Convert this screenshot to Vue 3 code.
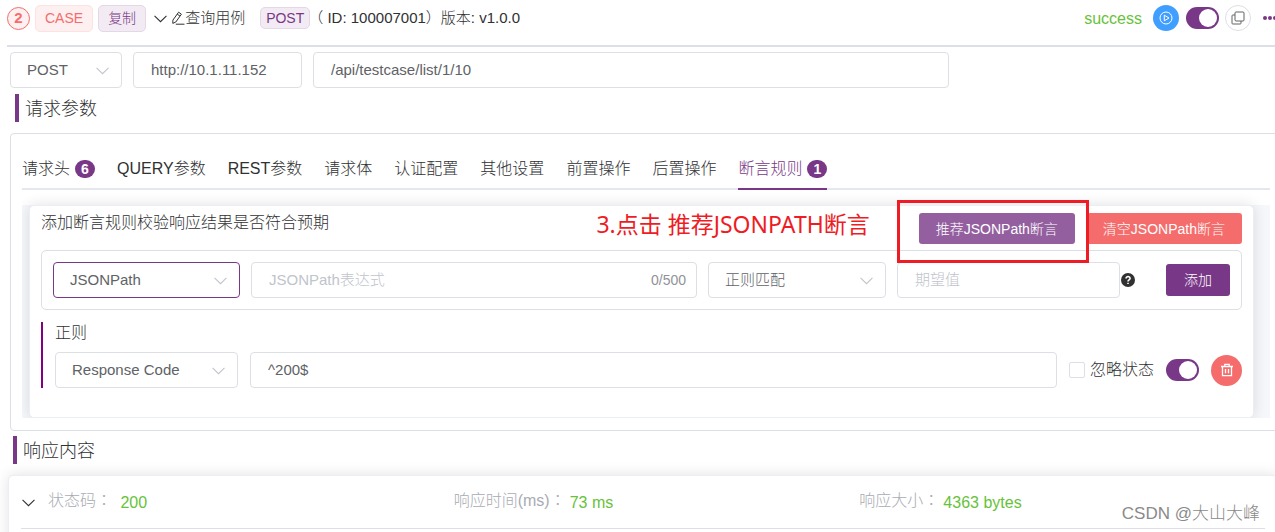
<script setup>
import { ref } from 'vue'

const method = ref('POST')
const host = ref('http://10.1.11.152')
const path = ref('/api/testcase/list/1/10')
const enabled = ref(true)
const ruleEnabled = ref(true)
const ignored = ref(false)
const kind = ref('JSONPath')
const expression = ref('')
const matcher = ref('正则匹配')
const expected = ref('')
const source = ref('Response Code')
const pattern = ref('^200$')
const active = ref('断言规则')

const tabs = [
  { name: '请求头', count: 6 },
  { name: 'QUERY参数' },
  { name: 'REST参数' },
  { name: '请求体' },
  { name: '认证配置' },
  { name: '其他设置' },
  { name: '前置操作' },
  { name: '后置操作' },
  { name: '断言规则', count: 1 }
]

const metrics = [
  { label: '状态码：\u00a0', value: '200' },
  { label: '响应时间(ms)：', value: '73 ms' },
  { label: '响应大小：', value: '4363 bytes' }
]
</script>

<template>
  <main class="page">
    <header class="case-bar">
      <span class="step">2</span>
      <span class="tag danger">CASE</span>
      <button type="button" class="tag purple">复制</button>
      <button type="button" class="case-name">
        <svg class="chev" viewBox="0 0 12 12"><path d="M0.5 3.500 6 9l5.500-5.500" /></svg>
        <svg class="pen" viewBox="0 0 14 14"><path d="M7.600 1.200 10.400 3.200 4.800 11 1.800 12.400 1.900 9.100zM6.200 3.100 9 5.100M4.800 13.200h8.700" /></svg>
        <span>查询用例</span>
      </button>
      <span class="tag purple small">POST</span>
      <span class="case-id">（ ID: 100007001）版本: v1.0.0</span>
      <span class="result">success</span>
      <button type="button" class="round blue" aria-label="运行">
        <svg viewBox="0 0 14 14"><circle cx="7" cy="7" r="6" /><path d="M5.300 4.200v5.600L10 7z" /></svg>
      </button>
      <input v-model="enabled" class="switch" type="checkbox" role="switch" aria-label="启用用例" />
      <button type="button" class="round plain" aria-label="复制用例">
        <svg viewBox="0 0 14 14"><rect x="4" y="1" width="9" height="9" rx="1" /><path d="M4 4H1.800a.8.8 0 0 0-.8.8v7.400a.8.8 0 0 0 .8.8h7.400a.8.8 0 0 0 .8-.8V10" /></svg>
      </button>
      <button type="button" class="more" aria-label="更多">
        <svg viewBox="0 0 14 14"><circle cx="2" cy="7" r="2" /><circle cx="7" cy="7" r="2" /><circle cx="12" cy="7" r="2" /></svg>
      </button>
    </header>

    <div class="url-row">
      <div class="select">
        <select v-model="method" aria-label="请求方法"><option>POST</option></select>
        <svg class="chev" viewBox="0 0 12 12"><path d="M0.5 3.500 6 9l5.500-5.500" /></svg>
      </div>
      <input v-model="host" class="field" type="text" aria-label="主机" />
      <input v-model="path" class="field" type="text" aria-label="路径" />
    </div>

    <h2 class="section">请求参数</h2>

    <section class="panel">
      <nav class="tabs" role="tablist">
        <button
          v-for="tab in tabs"
          :key="tab.name"
          type="button"
          role="tab"
          class="tab"
          :class="{ active: tab.name === active }"
          :aria-selected="tab.name === active"
          @click="active = tab.name"
        >
          {{ tab.name }}<span v-if="tab.count" class="badge">{{ tab.count }}</span>
        </button>
      </nav>

      <div class="tab-body">
        <div class="backdrop">
          <div class="card">
            <div class="card-head">
              <span>添加断言规则校验响应结果是否符合预期</span>
              <strong class="note">3.点击 推荐JSONPATH断言</strong>
              <div class="framed">
                <button type="button" class="btn soft">推荐JSONPath断言</button>
              </div>
              <button type="button" class="btn red">清空JSONPath断言</button>
            </div>

            <div class="rule-form">
              <div class="select focus">
                <select v-model="kind" aria-label="断言类型"><option>JSONPath</option></select>
                <svg class="chev" viewBox="0 0 12 12"><path d="M0.5 3.500 6 9l5.500-5.500" /></svg>
              </div>
              <div class="field counted">
                <input v-model="expression" type="text" maxlength="500" placeholder="JSONPath表达式" aria-label="JSONPath表达式" />
                <span>{{ expression.length }}/500</span>
              </div>
              <div class="select">
                <select v-model="matcher" aria-label="匹配方式"><option>正则匹配</option></select>
                <svg class="chev" viewBox="0 0 12 12"><path d="M0.5 3.500 6 9l5.500-5.500" /></svg>
              </div>
              <div class="expected">
                <input v-model="expected" class="field" type="text" placeholder="期望值" aria-label="期望值" />
                <svg class="help" viewBox="0 0 14 14"><circle cx="7" cy="7" r="7" /><path d="M5 5.600C5 2.800 9.200 3 9.100 5.500 9 6.900 7 6.900 7 8.500M7 9.700v1.300" /></svg>
              </div>
              <button type="button" class="btn solid">添加</button>
            </div>

            <div class="rule-group">
              <div class="rule-label">正则</div>
              <div class="rule-row">
                <div class="select">
                  <select v-model="source" aria-label="匹配来源"><option>Response Code</option></select>
                  <svg class="chev" viewBox="0 0 12 12"><path d="M0.5 3.500 6 9l5.500-5.500" /></svg>
                </div>
                <input v-model="pattern" class="field" type="text" aria-label="正则表达式" />
                <label class="check"><input v-model="ignored" type="checkbox" />忽略状态</label>
                <input v-model="ruleEnabled" class="switch" type="checkbox" role="switch" aria-label="启用规则" />
                <button type="button" class="round delete" aria-label="删除">
                  <svg viewBox="0 0 14 14"><path d="M1 3.500h12M4.800 3.300V1.300h4.400v2M2.500 3.700v9h9v-9M5.500 6v4.300M8.500 6v4.300" /></svg>
                </button>
              </div>
            </div>
          </div>
        </div>
      </div>
    </section>

    <h2 class="section response">响应内容</h2>

    <section class="response-card">
      <div class="metrics">
        <svg class="chev" viewBox="0 0 12 12"><path d="M0.5 3.500 6 9l5.500-5.500" /></svg>
        <div v-for="m in metrics" :key="m.label" class="metric">
          <span>{{ m.label }}</span><span class="value">{{ m.value }}</span>
        </div>
      </div>
    </section>
    <div class="watermark">CSDN @大山大峰</div>
  </main>
</template>

<style>
html,
body {
  height: 100%;
  overflow: hidden;
  background: #fff;
}
</style>

<style scoped>
* {
  box-sizing: border-box;
}
.page {
  --purple: #783887;
  --line: #dcdfe6;
  position: relative;
  height: 100vh;
  overflow: hidden;
  color: #303133;
  font: 300 16px/20px "Liberation Sans", "Noto Sans CJK SC", sans-serif;
}
button,
input,
select {
  margin: 0;
  font: inherit;
  color: inherit;
}
button {
  padding: 0;
  border: 0;
  background: none;
  cursor: pointer;
}
svg {
  display: block;
  flex: none;
  fill: none;
  stroke: currentColor;
}
.chev {
  width: 13px;
  height: 13px;
}

.case-bar {
  display: flex;
  align-items: center;
  height: 47px;
  margin: 0 -2px 0 7px;
  padding-bottom: 9px;
  border-bottom: 2px solid var(--line);
}
.step {
  width: 23px;
  height: 23px;
  margin-right: 5px;
  border: 1px solid #f56c6c;
  border-radius: 50%;
  background: #fef0f0;
  color: #f56c6c;
  font-size: 15px;
  font-weight: 700;
  line-height: 20px;
  text-align: center;
}
.tag {
  height: 27px;
  margin-right: 5px;
  padding: 0 9px;
  border: 1px solid;
  border-radius: 5px;
  font-size: 14px;
  line-height: 24px;
}
.danger {
  border-color: #fde2e2;
  background: #fef0f0;
  color: #f56c6c;
}
.purple {
  border-color: #e4d7e7;
  background: #f2ebf3;
  color: var(--purple);
}
.small {
  height: 22px;
  margin: 0;
  padding: 0 5px;
  line-height: 20px;
}
.case-name {
  display: flex;
  align-items: center;
  margin: 0 15px 0 3px;
  font-size: 15px;
}
.pen {
  width: 14px;
  height: 14px;
  margin-left: 4px;
}
.case-id {
  margin: 0 auto 0 -2px;
  font-size: 15px;
}
.result {
  margin-right: 11px;
  padding-top: 2px;
  color: #67c23a;
}
.round {
  display: flex;
  align-items: center;
  justify-content: center;
  flex: none;
  width: 26px;
  height: 26px;
  border-radius: 50%;
}
.round svg {
  width: 14px;
  height: 14px;
}
.blue {
  margin-right: 7px;
  background: #409eff;
  color: #fff;
}
.plain {
  margin: 0 12px 0 6px;
  border: 1px solid var(--line);
  color: #606266;
}
.more {
  color: var(--purple);
}
.more svg {
  width: 14px;
  height: 14px;
  fill: currentColor;
  stroke: none;
}
.switch {
  appearance: none;
  display: flex;
  align-items: center;
  flex: none;
  width: 33px;
  height: 22px;
  padding: 2px;
  border-radius: 11px;
  background: var(--line);
}
.switch::before {
  content: "";
  width: 18px;
  height: 18px;
  border-radius: 50%;
  background: #fff;
}
.switch:checked {
  justify-content: flex-end;
  background: var(--purple);
}

.select,
.field {
  min-width: 0;
  height: 36px;
  border: 1px solid var(--line);
  border-radius: 4px;
  background: #fff;
  color: #606266;
  font-size: 15px;
  outline: 0;
}
.field {
  padding: 0 17px;
}
input.field {
  padding-bottom: 1px;
}
.select {
  display: grid;
  align-items: center;
}
.select select {
  grid-area: 1 / 1;
  width: 100%;
  height: 34px;
  padding: 0 32px 0 16px;
  appearance: none;
  border: 0;
  border-radius: 4px;
  background: none;
  outline: 0;
}
.select .chev {
  grid-area: 1 / 1;
  justify-self: end;
  margin-right: 12px;
  color: #c0c4cc;
  pointer-events: none;
}
.focus {
  border-color: var(--purple);
}
input::placeholder {
  color: #c0c4cc;
  opacity: 1;
}

.url-row {
  display: grid;
  grid-template-columns: 112fr 169fr 636fr 315fr;
  gap: 11px;
  padding: 5px 0 0 10px;
}
.section {
  height: 28px;
  margin: 6px 0 0 15px;
  padding-left: 6px;
  border-left: 4px solid var(--purple);
  font-size: 18px;
  font-weight: 300;
  line-height: 30px;
}
.response {
  margin: 5px 0 0 13px;
}

.panel {
  margin: 11px -7px 0 10px;
  padding: 12px 11px;
  border: 1px solid var(--line);
  border-radius: 4px;
}
.tabs {
  display: flex;
  gap: 22px;
  border-bottom: 2px solid #e4e7ed;
}
.tab {
  display: flex;
  align-items: center;
  height: 44px;
  margin-bottom: -2px;
  padding-top: 3px;
  border-bottom: 2px solid transparent;
  white-space: nowrap;
}
.tab.active {
  border-color: var(--purple);
  color: var(--purple);
}
.badge {
  width: 20px;
  height: 18px;
  margin-left: 5px;
  border-radius: 9px;
  background: var(--purple);
  color: #fff;
  font-size: 14px;
  font-weight: 700;
  line-height: 18px;
}
.tab-body {
  padding-top: 15px;
  overflow: hidden;
}
.backdrop {
  padding: 0 16px 0 7px;
  background: #f5f7fa;
}
.card {
  min-height: 213px;
  padding: 7px 11px;
  border: 1px solid #ebeef5;
  border-radius: 5px;
  background: #fff;
  box-shadow: 0 0 14px rgba(0, 0, 0, 0.12);
}
.card-head {
  display: flex;
  align-items: flex-start;
}
.note {
  margin: 0 49px 0 auto;
  color: #ee1c25;
  font: 400 23px/22px "Noto Sans", "Noto Sans CJK SC", sans-serif;
}
.btn {
  height: 31px;
  padding: 0 17px;
  border-radius: 3px;
  color: #fff;
  font-size: 14px;
  white-space: nowrap;
}
.soft {
  background: #935f9f;
}
.red {
  margin-left: 11px;
  background: #f56c6c;
}
.solid {
  height: 32px;
  background: var(--purple);
}
.framed {
  position: relative;
}
.framed::after {
  content: "";
  position: absolute;
  z-index: 2;
  inset: -13px -14px -19px -22px;
  border: 3px solid #ee1c25;
  pointer-events: none;
}
.rule-form {
  display: grid;
  grid-template-columns: 187fr 446fr 178fr 258fr 64px;
  align-items: center;
  gap: 11px;
  margin-top: 6px;
  padding: 11px;
  border: 1px solid var(--line);
  border-radius: 5px;
}
.counted {
  display: flex;
  align-items: center;
  padding-right: 10px;
}
.counted input {
  flex: 1;
  min-width: 0;
  padding: 0;
  border: 0;
  background: none;
  outline: 0;
}
.counted span {
  color: #909399;
  font-size: 14px;
}
.expected {
  display: flex;
  align-items: center;
  gap: 1px;
  min-width: 0;
  padding-right: 20px;
}
.expected .field {
  flex: 1;
}
.help {
  width: 14px;
  height: 14px;
}
.help circle {
  fill: #303133;
  stroke: none;
}
.help path {
  stroke: #fff;
  stroke-width: 1.6;
}
.rule-group {
  margin-top: 12px;
  padding-left: 12px;
  border-left: 2px solid #800080;
}
.rule-label {
  padding: 1px 0 9px;
}
.rule-row {
  display: flex;
  align-items: center;
  gap: 12px;
}
.rule-row .select {
  width: 183px;
}
.rule-row .field {
  flex: 1;
}
.check {
  display: flex;
  align-items: center;
  gap: 5px;
}
.check input {
  appearance: none;
  width: 16px;
  height: 16px;
  border: 1px solid var(--line);
  border-radius: 2px;
  background: #fff;
}
.delete {
  width: 31px;
  height: 31px;
  background: #f56c6c;
  color: #fff;
}
.delete svg {
  stroke-width: 1.3;
}

.response-card {
  margin: 11px -3px 0 8px;
  padding: 0 12px 20px;
  border: 1px solid #ebeef5;
  border-radius: 5px;
  background: #fff;
  box-shadow: 0 0 14px rgba(0, 0, 0, 0.12);
}
.metrics {
  display: flex;
  align-items: center;
  height: 53px;
  padding-left: 1px;
  border-bottom: 1px solid var(--line);
}
.metrics .chev {
  margin-right: 13px;
}
.metric {
  display: flex;
  flex: 1;
  gap: 4px;
  color: #a8abb2;
  font-family: "Liberation Sans", "Noto Sans CJK TC", sans-serif;
}
.metric .value {
  padding-top: 2px;
  color: #67c23a;
}
.watermark {
  position: absolute;
  right: 15px;
  bottom: 8px;
  color: #8a8a8a;
  font-size: 17px;
}
</style>
